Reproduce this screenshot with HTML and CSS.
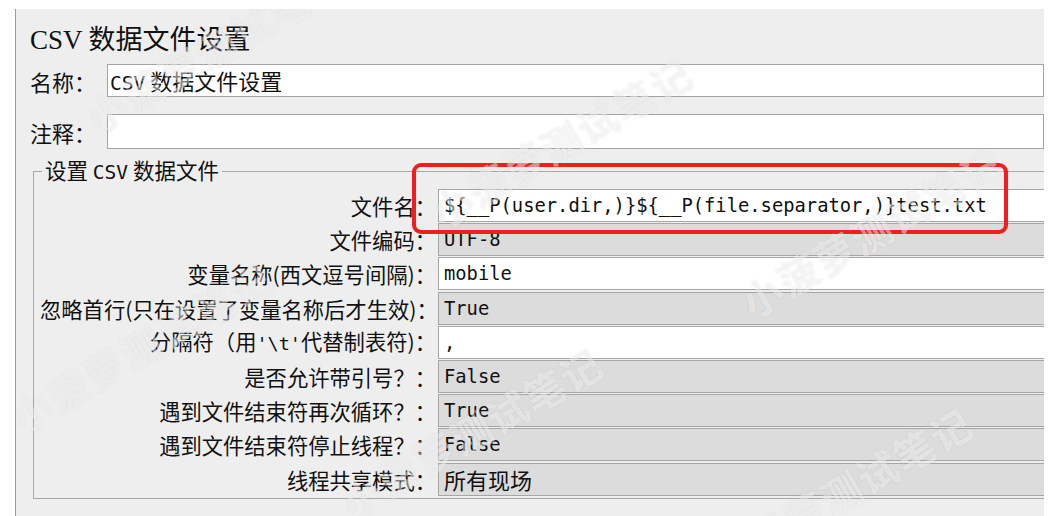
FILE: index.html
```html
<!DOCTYPE html>
<html lang="zh-CN">
<head>
    <meta charset="UTF-8">
    <meta name="viewport" content="width=device-width, initial-scale=1.0">
    <title>CSV 数据文件设置</title>
    <link rel="stylesheet" href="styles.css">
</head>
<body>
    <div class="panel">
        <h1 class="title"><span class="serif">CSV</span> 数据文件设置</h1>

        <div class="line-row">
            <label class="line-label">名称：</label>
            <div class="line-input"><span class="mono">CSV</span> 数据文件设置</div>
        </div>
        <div class="line-row comment">
            <label class="line-label">注释：</label>
            <div class="line-input"></div>
        </div>

        <fieldset class="group">
            <legend>设置 <span class="mono">CSV</span> 数据文件</legend>
            <div class="form-grid">
                <label>文件名：</label>
                <div class="value">${__P(user.dir,)}${__P(file.separator,)}test.txt</div>

                <label>文件编码：</label>
                <div class="value off">UTF-8</div>

                <label>变量名称(西文逗号间隔)：</label>
                <div class="value">mobile</div>

                <label>忽略首行(只在设置了变量名称后才生效)：</label>
                <div class="value off">True</div>

                <label>分隔符（用<span class="mono">'\t'</span>代替制表符)：</label>
                <div class="value">,</div>

                <label>是否允许带引号？：</label>
                <div class="value off">False</div>

                <label>遇到文件结束符再次循环？：</label>
                <div class="value off">True</div>

                <label>遇到文件结束符停止线程？：</label>
                <div class="value off">False</div>

                <label>线程共享模式：</label>
                <div class="value off"><span class="zh">所有现场</span></div>
            </div>
        </fieldset>

        <!-- red marker drawn over the file name row -->
        <div class="highlight"></div>

        <div class="wm wm-1">小菠萝测试笔记</div>
        <div class="wm wm-2">小菠萝测试笔记</div>
        <div class="wm wm-3">小菠萝测试笔记</div>
        <div class="wm wm-4">小菠萝测试笔记</div>
        <div class="wm wm-5">小菠萝测试笔记</div>
        <div class="wm wm-6">小菠萝测试笔记</div>
    </div>
</body>
</html>
```

FILE: styles.css
```css
body {
    margin: 0;
    padding: 9px 4px 0 15px;
    background: #ffffff;
    font-family: "Noto Sans CJK SC", "Noto Sans", sans-serif;
    color: #111111;
}
.panel {
    position: relative;
    height: 507px;
    background: #eeeeee;
    border-left: 1px solid #9c9c9c;
    overflow: hidden;
}
.serif {
    font-family: "Liberation Serif", serif;
}
.mono {
    font-family: "DejaVu Sans Mono", monospace;
    font-size: 19.5px;
}
.title {
    margin: 13px 0 0 0;
    padding-left: 14px;
    font-size: 27px;
    font-weight: normal;
    line-height: 32px;
}
.line-row {
    display: flex;
    align-items: center;
    padding-left: 14px;
    margin-top: 8px;
    font-size: 22px;
}
.line-row.comment {
    margin-top: 17px;
}
.line-row.comment .line-input {
    height: 33px;
}
.line-label {
    width: 77px;
    flex-shrink: 0;
}
.line-input {
    flex: 1;
    height: 31px;
    line-height: 31px;
    background: #ffffff;
    border: 1px solid #a4a4a4;
    padding-left: 2px;
    white-space: nowrap;
}
.group {
    margin: 8px -20px 0 17px;
    padding: 3px 0 2px 6px;
    border: 1px solid #a8a8a8;
}
.group legend {
    margin-left: 2px;
    padding: 0 3px;
    font-size: 21.5px;
    line-height: 26px;
}
.form-grid {
    display: grid;
    grid-template-columns: 396px 1fr;
    grid-auto-rows: 33px;
    row-gap: 1.2px;
    column-gap: 2px;
    align-items: center;
    font-size: 21.3px;
}
.form-grid label {
    text-align: right;
    white-space: nowrap;
    line-height: 33px;
}
.form-grid .mono {
    font-size: 18.5px;
}
.value {
    height: 31px;
    line-height: 31px;
    background: #ffffff;
    border: 1px solid #a6a6a6;
    padding-left: 5px;
    font-family: "DejaVu Sans Mono", monospace;
    font-size: 18.8px;
    white-space: nowrap;
}
.value.off {
    background: #dcdcdc;
}
.zh {
    font-family: "Noto Sans CJK SC", sans-serif;
    font-size: 22px;
}
.highlight {
    position: absolute;
    left: 396px;
    top: 154px;
    width: 588px;
    height: 63px;
    border: 4px solid #f21d1d;
    border-radius: 9px;
}
.wm {
    position: absolute;
    width: 300px;
    font-size: 40px;
    font-weight: bold;
    line-height: 48px;
    letter-spacing: 2px;
    white-space: nowrap;
    color: rgba(255, 255, 255, 0.45);
    text-shadow: 0 0 2px rgba(120, 120, 120, 0.15);
    transform: rotate(-30deg);
    pointer-events: none;
}
.wm-1 { left: 53px; top: 12px; }
.wm-2 { left: 398px; top: 107px; }
.wm-3 { left: 708px; top: 197px; }
.wm-4 { left: -22px; top: 312px; }
.wm-5 { left: 308px; top: 397px; }
.wm-6 { left: 678px; top: 457px; }
```
